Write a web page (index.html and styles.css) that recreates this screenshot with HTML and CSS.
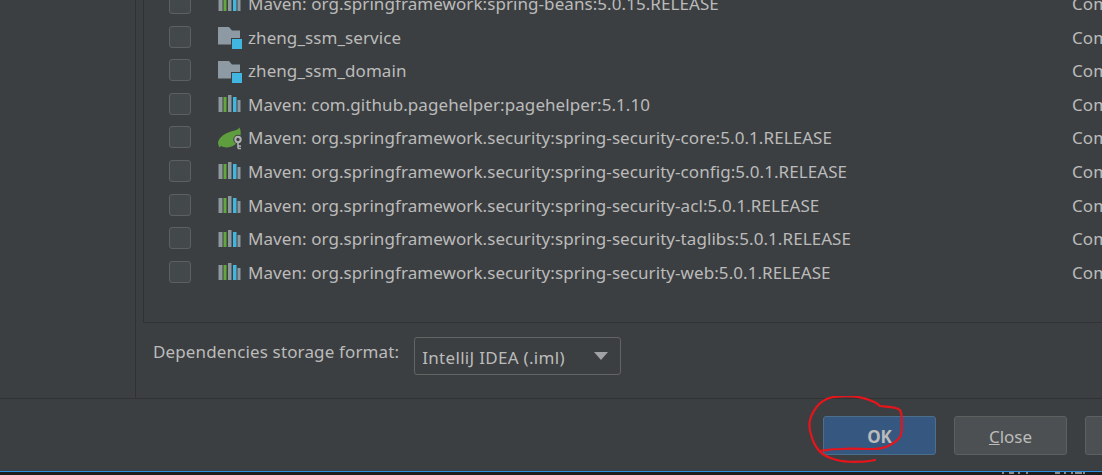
FILE: index.html
```html
<!DOCTYPE html>
<html lang="en">
<head>
<meta charset="utf-8">
<title>Project Structure</title>
<link rel="stylesheet" href="styles.css">
</head>
<body>
<svg class="defs" width="0" height="0" aria-hidden="true">
  <symbol id="lib" viewBox="0 0 24 24">
    <rect x="0.5" y="5" width="4" height="15" fill="#8c979e"/>
    <rect x="5.5" y="5" width="3" height="15" fill="#62a83c"/>
    <rect x="10" y="3" width="3.5" height="17" fill="#8c979e"/>
    <rect x="15" y="5" width="3.5" height="15" fill="#40b6e0"/>
    <rect x="19.5" y="8" width="3" height="12" fill="#8c979e"/>
  </symbol>
  <symbol id="mod" viewBox="0 0 24 24">
    <path d="M0 2h11l3 3.5h8V19.5H0z" fill="#8d9aa3"/>
    <rect x="13.5" y="13.5" width="11" height="11" fill="#40b6e0" stroke="#3c3f41"/>
  </symbol>
  <symbol id="spring" viewBox="0 0 24 24">
    <path d="M0 16C2 10 8 7 13 5.500 17 4.500 20 4 21.500 1.500 23.500 6 23 10 21 13c-1 4-5 7-9 8-4 1-7 0-9-1l-1.500 1.500C.5 20 0 18 0 16z" fill="#5f9e3f"/>
    <circle cx="20" cy="13.500" r="3.200" fill="none" stroke="#3c3f41" stroke-width="3"/>
    <path d="M20 17v7" stroke="#3c3f41" stroke-width="4"/>
    <circle cx="20" cy="13.500" r="2.700" fill="#3c3f41" stroke="#afb1b3" stroke-width="2"/>
    <path d="M20 16v6.500M20 20h3M20 22.500h3" fill="none" stroke="#afb1b3" stroke-width="1.600"/>
  </symbol>
</svg>
<div class="window">
  <div class="body">
    <aside class="sidebar"></aside>
    <main class="main">
      <section class="table">
        <ul class="rows">
          <li class="row"><span class="check"></span><svg class="icon"><use href="#lib"/></svg><span class="name">Maven: org.springframework:spring-beans:5.0.15.RELEASE</span><span class="scope">Compile</span></li>
          <li class="row"><span class="check"></span><svg class="icon"><use href="#mod"/></svg><span class="name">zheng_ssm_service</span><span class="scope">Compile</span></li>
          <li class="row"><span class="check"></span><svg class="icon"><use href="#mod"/></svg><span class="name">zheng_ssm_domain</span><span class="scope">Compile</span></li>
          <li class="row"><span class="check"></span><svg class="icon"><use href="#lib"/></svg><span class="name">Maven: com.github.pagehelper:pagehelper:5.1.10</span><span class="scope">Compile</span></li>
          <li class="row"><span class="check"></span><svg class="icon"><use href="#spring"/></svg><span class="name">Maven: org.springframework.security:spring-security-core:5.0.1.RELEASE</span><span class="scope">Compile</span></li>
          <li class="row"><span class="check"></span><svg class="icon"><use href="#lib"/></svg><span class="name">Maven: org.springframework.security:spring-security-config:5.0.1.RELEASE</span><span class="scope">Compile</span></li>
          <li class="row"><span class="check"></span><svg class="icon"><use href="#lib"/></svg><span class="name">Maven: org.springframework.security:spring-security-acl:5.0.1.RELEASE</span><span class="scope">Compile</span></li>
          <li class="row"><span class="check"></span><svg class="icon"><use href="#lib"/></svg><span class="name">Maven: org.springframework.security:spring-security-taglibs:5.0.1.RELEASE</span><span class="scope">Compile</span></li>
          <li class="row"><span class="check"></span><svg class="icon"><use href="#lib"/></svg><span class="name">Maven: org.springframework.security:spring-security-web:5.0.1.RELEASE</span><span class="scope">Compile</span></li>
        </ul>
      </section>
      <div class="format">
        <span class="format-label">Dependencies storage format:</span>
        <span class="select"><span class="select-value">IntelliJ IDEA (.iml)</span><i class="caret"></i></span>
      </div>
    </main>
  </div>
  <footer class="footer">
    <button class="btn primary">OK</button>
    <button class="btn"><u>C</u>lose</button>
    <button class="btn"></button>
  </footer>
  <div class="status">
    <svg class="status-marks" width="1102" height="3" aria-hidden="true" fill="#8a8a8a">
      <rect x="1002" width="2" height="2"/><rect x="1009" width="5" height="2"/><rect x="1018" width="2" height="2"/><rect x="1026" width="2" height="2"/>
      <rect x="1055" width="5" height="2"/><rect x="1064" width="2" height="2"/><rect x="1071" width="2" height="2"/><rect x="1075" width="7" height="2"/><rect x="1083" width="2" height="2"/>
    </svg>
  </div>
  <svg class="scribble" viewBox="0 0 110 70" width="110" height="70" aria-hidden="true">
    <path d="M71 64C66 65 61 66 56 65.700 48 66 40 66 32.700 64 25 62 20 60 16 55.700 11 50 9 46 7.700 40.700 5 34 5 29 6 24 8 17 11 12 16 7.300 21 3 27 1 32.700.7 39 0 46 0 52.700.7 60 2 67 4 72.700 7.300L76 10C82 11 91 10 96 14 98 18 98 23 97.700 27 98 32 98 37 96 40.700 94 44 90 47 86 49 81 52 75 53 69 53 58 53 47 52 36 53 29 53 23 54 17.700 54.700" fill="none" stroke="#e8141c" stroke-width="2.200" stroke-linecap="round" stroke-linejoin="round"/>
  </svg>
</div>
</body>
</html>
```
FILE: styles.css
```css
* { box-sizing: border-box; }
html, body { margin: 0; padding: 0; }
body {
  background: #3c3f41;
  color: #bbbbbb;
  font-family: "Noto Sans", "Open Sans", sans-serif;
  font-size: 17px;
  letter-spacing: 0.07px;
  overflow: hidden;
}
.defs { position: absolute; }
.window {
  position: relative;
  width: 1102px;
  height: 475px;
  display: flex;
  flex-direction: column;
  overflow: hidden;
}
.body {
  flex: 1;
  min-height: 0;
  display: flex;
  border-bottom: 1px solid #323232;
}
.sidebar {
  width: 136px;
  flex: none;
  border-right: 1px solid #323232;
}
.main {
  flex: 1;
  min-width: 0;
  padding-left: 7px;
  display: flex;
  flex-direction: column;
  justify-content: flex-end;
}
.table {
  flex: 1;
  min-height: 0;
  display: flex;
  flex-direction: column;
  justify-content: flex-end;
  border-left: 1px solid #323232;
  border-bottom: 1px solid #323232;
  padding-bottom: 33px;
}
.rows { list-style: none; margin: 0; padding: 0; flex: none; }
.row {
  height: 33.6px;
  display: flex;
  align-items: center;
  white-space: nowrap;
}
.check {
  flex: none;
  width: 22px;
  height: 22px;
  margin: -1px 0 0 25px;
  background: #43494a;
  border: 1px solid #5e6060;
  border-radius: 3px;
}
.icon { flex: none; width: 24px; height: 24px; margin-left: 27px; }
.name { flex: none; width: 824px; margin-left: 6px; }
.scope { flex: none; }
.format {
  flex: none;
  height: 75px;
  padding: 14px 0 0 10px;
  display: flex;
  align-items: flex-start;
  gap: 15px;
}
.format-label { line-height: 30px; letter-spacing: 0.14px; }
.select {
  width: 207px;
  height: 38px;
  padding: 3px 12px 0 7px;
  display: flex;
  align-items: center;
  justify-content: space-between;
  border: 1px solid #646464;
  border-radius: 3px;
  background: #3c3f41;
}
.select-value { letter-spacing: 0.3px; }
.caret {
  width: 0;
  height: 0;
  margin-top: -3px;
  border-left: 7px solid transparent;
  border-right: 7px solid transparent;
  border-top: 8px solid #a0a2a4;
}
.footer {
  flex: none;
  height: 72px;
  padding: 17px 0 0 823px;
  display: flex;
  align-items: flex-start;
  gap: 18px;
}
.btn {
  flex: none;
  width: 113px;
  height: 39px;
  padding: 2px 0 0;
  font: inherit;
  color: #bbbbbb;
  background: #4c5052;
  border: 1px solid #5e6060;
  border-radius: 3px;
}
.primary {
  background: #365880;
  border-color: #4c708c;
  font-weight: 700;
}
.status {
  flex: none;
  height: 4px;
  overflow: hidden;
  background: #1c1c1c;
  border-top: 1px solid #2a8fe0;
}
.status-marks { display: block; }
.scribble { position: absolute; left: 804px; top: 396px; }
```
